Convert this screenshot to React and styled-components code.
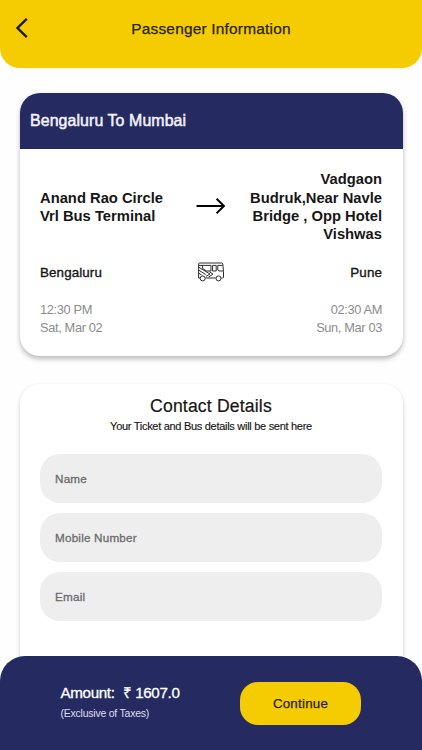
import React from 'react'
import styled, { createGlobalStyle } from 'styled-components'

function App() {
  return (
    <Screen>
      <GlobalStyle />
      <Header>
        <BackButton aria-label="Back">
          <svg width="12" height="20" viewBox="0 0 12 20" fill="none" stroke="#1c1a10" strokeWidth="2.3">
            <path d="M10.8 0.9 L1.5 10 L10.8 19.1" />
          </svg>
        </BackButton>
        <Title>Passenger Information</Title>
      </Header>

      <Content>
        <Card>
          <CardHead>Bengaluru To Mumbai</CardHead>
          <Route>
            <Stops>
              <Stop>
                Anand Rao Circle
                <br />
                Vrl Bus Terminal
              </Stop>
              <ArrowIcon />
              <Stop $right>
                Vadgaon
                <br />
                Budruk,Near Navle
                <br />
                Bridge , Opp Hotel
                <br />
                Vishwas
              </Stop>
            </Stops>
            <Cities>
              <City>Bengaluru</City>
              <BusIcon />
              <City $right>Pune</City>
            </Cities>
            <Times>
              <Time>
                <span>12:30 PM</span>
                <span>Sat, Mar 02</span>
              </Time>
              <Time $right>
                <span>02:30 AM</span>
                <span>Sun, Mar 03</span>
              </Time>
            </Times>
          </Route>
        </Card>

        <ContactCard>
          <ContactTitle>Contact Details</ContactTitle>
          <ContactNote>Your Ticket and Bus details will be sent here</ContactNote>
          <Fields>
            <Input placeholder="Name" />
            <Input placeholder="Mobile Number" />
            <Input placeholder="Email" />
          </Fields>
        </ContactCard>
      </Content>

      <Footer>
        <Amount>
          <Price>
            <span>Amount:</span>
            <span>₹ 1607.0</span>
          </Price>
          <Taxes>(Exclusive of Taxes)</Taxes>
        </Amount>
        <Continue>Continue</Continue>
      </Footer>
    </Screen>
  )
}

export default App

function ArrowIcon() {
  return (
    <svg width="30" height="18" viewBox="0 0 30 18" fill="none" stroke="#000" strokeWidth="1.9">
      <path d="M0.5 8 H28 M20.6 0.8 L28 8 L20.6 15.2" />
    </svg>
  )
}

function BusIcon() {
  return (
    <svg width="28" height="20" viewBox="0 0 28 20" fill="none" stroke="#222" strokeWidth="0.95">
      <path d="M3 16 H1.6 V2 Q1.6 1 2.6 1 H24.6 Q25.6 1 25.8 2 L26.5 9.5 V15 Q26.5 16 25.5 16 H24.4 M8.4 16 H18.6" />
      <path d="M2 3.4 H14 V9 H9.4 L5.4 6.2 V3.4 M15.6 3.4 H19.2 V9 H15.6 Z M20.8 3.4 H25.6 M20.8 3.4 V8 L22 9 H26.2" />
      <path d="M1.8 5.2 L13 12.1 L9 14.4 M1.8 8.2 L8.8 12.6 M1.8 11.2 L4.6 13 M12.4 9.8 L16 12.1 L11.6 15" />
      <circle cx="5.7" cy="16.4" r="2.5" fill="#fff" />
      <circle cx="21.5" cy="16.4" r="2.5" fill="#fff" />
    </svg>
  )
}

const GlobalStyle = createGlobalStyle`
  * {
    box-sizing: border-box;
  }

  body {
    margin: 0;
    background: #fefefe;
    font-family: "Liberation Sans", Arial, sans-serif;
    color: #161616;
  }

  button, input {
    font-family: inherit;
    border: none;
    outline: none;
  }
`
const Screen = styled.div`
  height: 750px;
  overflow: hidden;
  display: flex;
  flex-direction: column;
`
const Header = styled.header`
  height: 68.4px;
  flex-shrink: 0;
  background: #f5cb02;
  border-radius: 0 0 20px 20px;
  display: grid;
  grid-template-columns: 44px 1fr 44px;
  align-items: center;
  padding-bottom: 11px;
`
const BackButton = styled.button`
  background: none;
  display: flex;
  padding: 0 0 2px 15.5px;
  cursor: pointer;
`
const Title = styled.h1`
  margin: 0;
  text-align: center;
  font-size: 15.4px;
  font-weight: 400;
  letter-spacing: 0.22px;
  color: #28210a;
  -webkit-text-stroke: 0.25px #28210a;
`
const Content = styled.main`
  flex: 1;
  padding: 24.6px 19.5px 0;
  display: flex;
  flex-direction: column;
  gap: 28px;
`
const Card = styled.section`
  height: 263px;
  flex-shrink: 0;
  background: #fff;
  border-radius: 20px;
  overflow: hidden;
  box-shadow: 0 3px 5px rgba(0, 0, 0, 0.27);
`
const CardHead = styled.h2`
  margin: 0;
  height: 56px;
  background: #252a61;
  color: #f3f3fa;
  display: flex;
  align-items: center;
  padding: 1px 0 0 10.5px;
  font-size: 15.9px;
  font-weight: 400;
  letter-spacing: 0.1px;
  -webkit-text-stroke: 0.5px #f3f3fa;
`
const Route = styled.div`
  padding: 21px 20.5px 0;
`
const Stops = styled.div`
  height: 74px;
  display: grid;
  grid-template-columns: 1fr 30px 1fr;
  align-items: center;
`
const Stop = styled.div`
  font-size: 14.75px;
  line-height: 18.3px;
  font-weight: 700;
  white-space: nowrap;
  text-align: ${(props) => (props.$right ? 'right' : 'left')};
  justify-self: ${(props) => (props.$right ? 'end' : 'start')};
`
const Cities = styled.div`
  margin-top: 18px;
  height: 20px;
  display: grid;
  grid-template-columns: 1fr 28px 1fr;
  align-items: center;
`
const City = styled.div`
  padding-top: 1px;
  font-size: 13.4px;
  letter-spacing: 0.1px;
  -webkit-text-stroke: 0.35px #161616;
  text-align: ${(props) => (props.$right ? 'right' : 'left')};
`
const Times = styled.div`
  margin-top: 19.5px;
  display: flex;
  justify-content: space-between;
`
const Time = styled.div`
  display: flex;
  flex-direction: column;
  font-size: 12.8px;
  line-height: 17.3px;
  letter-spacing: -0.35px;
  color: #8c8c8c;
  text-align: ${(props) => (props.$right ? 'right' : 'left')};
`
const ContactCard = styled.section`
  height: 340px;
  flex-shrink: 0;
  background: #fff;
  border-radius: 20px;
  padding: 11px 20.5px 0;
  box-shadow: 0 2px 4px rgba(0, 0, 0, 0.2);
`
const ContactTitle = styled.h2`
  margin: 0;
  text-align: center;
  font-size: 17.6px;
  line-height: 22px;
  font-weight: 400;
  letter-spacing: 0.17px;
  -webkit-text-stroke: 0.2px #161616;
`
const ContactNote = styled.p`
  margin: 2px 0 0;
  text-align: center;
  font-size: 11px;
  line-height: 14px;
  letter-spacing: -0.29px;
  -webkit-text-stroke: 0.15px #161616;
`
const Fields = styled.form`
  margin-top: 21px;
  display: flex;
  flex-direction: column;
  gap: 10.3px;
`
const Input = styled.input`
  width: 100%;
  height: 48.7px;
  padding: 1px 15px 0;
  border-radius: 20px;
  background: #eee;
  font-size: 11.7px;
  letter-spacing: 0.2px;

  &::placeholder {
    color: #6b6b6b;
    opacity: 1;
    -webkit-text-stroke: 0.3px #6b6b6b;
  }
`
const Footer = styled.footer`
  position: fixed;
  left: 0;
  right: 0;
  bottom: 0;
  height: 94px;
  background: #252a61;
  border-radius: 25px 25px 0 0;
  display: flex;
  justify-content: space-between;
  align-items: center;
  padding: 0 61px 0 60.5px;
`
const Amount = styled.div`
  margin-top: -4px;
  color: #fff;
`
const Price = styled.div`
  display: flex;
  gap: 8px;
  font-size: 15.2px;
  line-height: 20px;
  letter-spacing: -0.35px;
  -webkit-text-stroke: 0.3px #fff;
`
const Taxes = styled.div`
  margin-top: 3px;
  font-size: 10.5px;
  line-height: 14px;
  letter-spacing: -0.23px;
  color: #dedff0;
`
const Continue = styled.button`
  width: 121px;
  height: 43px;
  border-radius: 18px;
  background: #f5cb02;
  color: #28210a;
  font-size: 13.3px;
  letter-spacing: 0.25px;
  -webkit-text-stroke: 0.25px #28210a;
  cursor: pointer;
`
